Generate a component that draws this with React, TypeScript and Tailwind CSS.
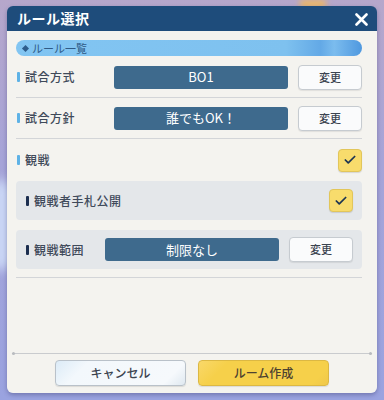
import { Check } from "lucide-react";

const jp = { fontFamily: '"Noto Sans CJK JP", "Noto Sans", sans-serif' };

function Label({ text, dark }: { text: string; dark?: boolean }) {
  return (
    <div className="flex items-center gap-[5px]">
      <span
        className={`w-[3px] h-[10px] rounded-[1px] ${
          dark ? "bg-[#1c2e4f]" : "bg-[#5eb2e6]"
        }`}
      />
      <span className="text-[12px] font-medium text-[#3f4a5a] tracking-[0.5px]">
        {text}
      </span>
    </div>
  );
}

function ValueBox({ text }: { text: string }) {
  return (
    <div className="w-[174px] h-[23px] rounded-[3px] bg-[#3e6a8d] flex items-center justify-center text-[13px] text-white">
      {text}
    </div>
  );
}

function ChangeButton() {
  return (
    <button className="w-[64px] h-[25px] rounded-[4px] bg-[#fafbfc] border border-[#c6cbd0] shadow-[0_1px_1px_rgba(0,0,0,0.08)] text-[11px] font-medium text-[#3a4350] flex items-center justify-center">
      変更
    </button>
  );
}

function CheckBox() {
  return (
    <div className="w-[24px] h-[23px] rounded-[4px] bg-[#f8dc6c] border border-[#e2c65a] shadow-[0_1px_1px_rgba(0,0,0,0.12)] flex items-center justify-center">
      <Check size={14} strokeWidth={3} className="text-[#1d3552]" />
    </div>
  );
}

export default function App() {
  return (
    <div
      style={jp}
      className="relative w-[384px] h-[400px] overflow-hidden bg-[linear-gradient(180deg,#b6a7cb_0%,#a6a4d8_40%,#9aa3e0_100%)] pt-[6px] pl-[7px]"
    >
      <div className="absolute left-[300px] top-0 w-[26px] h-[8px] bg-[#f0b860] blur-[3px]" />
      <div className="absolute -left-[20px] top-[180px] w-[40px] h-[90px] rounded-full bg-[#c8d4f4] blur-[6px]" />

      <div className="relative w-[370px] h-[387px] rounded-[6px] overflow-hidden shadow-[0_2px_4px_rgba(40,40,90,0.35)]">
        {/* Header */}
        <div className="h-[25px] bg-[#1e4c7b] flex items-center justify-between pl-[10px] pr-[9px]">
          <span className="text-[14px] font-bold text-white tracking-[0.5px]">
            ルール選択
          </span>
          <svg width="13" height="13" viewBox="0 0 13 13" className="mt-[1px]">
            <path
              d="M1.5 1.5 L11.5 11.5 M11.5 1.5 L1.5 11.5"
              stroke="white"
              strokeWidth="2.6"
              strokeLinecap="round"
            />
          </svg>
        </div>

        {/* Body */}
        <div className="h-[362px] bg-[#f4f3ef] flex flex-col">
          <div className="pl-[9px] pr-[15px] pt-[9px]">
            {/* Section pill */}
            <div className="h-[16px] rounded-full bg-[linear-gradient(90deg,#82c5f2_0%,#7ec1ef_78%,#63a9e6_88%,#7bbcee_92%,#4f98df_100%)] flex items-center pl-[7px] gap-[4px] mb-[1px]">
              <span className="w-[5px] h-[5px] rotate-45 bg-[#2d5d8c]" />
              <span className="text-[11px] text-[#2f5a86]">ルール一覧</span>
            </div>

            {/* Row 1 */}
            <div className="h-[41px] border-b border-[#d3d5d8] flex items-center pl-[1px]">
              <div className="w-[97px]">
                <Label text="試合方式" />
              </div>
              <ValueBox text="BO1" />
              <div className="ml-auto">
                <ChangeButton />
              </div>
            </div>

            {/* Row 2 */}
            <div className="h-[41px] border-b border-[#d3d5d8] flex items-center pl-[1px]">
              <div className="w-[97px]">
                <Label text="試合方針" />
              </div>
              <ValueBox text="誰でもOK！" />
              <div className="ml-auto">
                <ChangeButton />
              </div>
            </div>

            {/* Spectate */}
            <div className="h-[42px] flex items-center justify-between pl-[1px]">
              <Label text="観戦" />
              <CheckBox />
            </div>

            <div className="flex flex-col gap-[10px]">
              <div className="h-[39px] rounded-[4px] bg-[#e4e7ea] flex items-center justify-between pl-[10px] pr-[9px]">
                <Label text="観戦者手札公開" dark />
                <CheckBox />
              </div>
              <div className="h-[39px] rounded-[4px] bg-[#e4e7ea] flex items-center pl-[10px] pr-[9px]">
                <div className="w-[79px]">
                  <Label text="観戦範囲" dark />
                </div>
                <ValueBox text="制限なし" />
                <div className="ml-auto">
                  <ChangeButton />
                </div>
              </div>
            </div>

            <div className="mt-[8px] h-px bg-[#d3d5d8]" />
          </div>

          {/* Footer */}
          <div className="mt-auto px-[5px] pb-[7px]">
            <div className="relative h-px bg-[#c9cbce]">
              <span className="absolute left-0 -top-[1px] w-[3px] h-[3px] rounded-full bg-[#b8bbbf]" />
              <span className="absolute right-0 -top-[1px] w-[3px] h-[3px] rounded-full bg-[#b8bbbf]" />
            </div>
            <div className="mt-[6px] flex justify-center gap-[12px]">
              <button className="w-[131px] h-[26px] rounded-[4px] border border-[#b9c1c9] bg-[linear-gradient(135deg,#dcebf7_0%,#f3f8fc_22%,#f6f9fc_85%,#dfe8f0_100%)] shadow-[0_1px_1px_rgba(0,0,0,0.1)] text-[12px] font-medium text-[#3b4450] flex items-center justify-center">
                キャンセル
              </button>
              <button className="w-[131px] h-[26px] rounded-[4px] border border-[#dcb843] bg-[linear-gradient(135deg,#f9d86a_0%,#f6d04a_20%,#f6d04a_88%,#f0c84a_100%)] shadow-[0_1px_1px_rgba(0,0,0,0.1)] text-[12px] font-medium text-[#4d4230] flex items-center justify-center">
                ルーム作成
              </button>
            </div>
          </div>
        </div>
      </div>
    </div>
  );
}
